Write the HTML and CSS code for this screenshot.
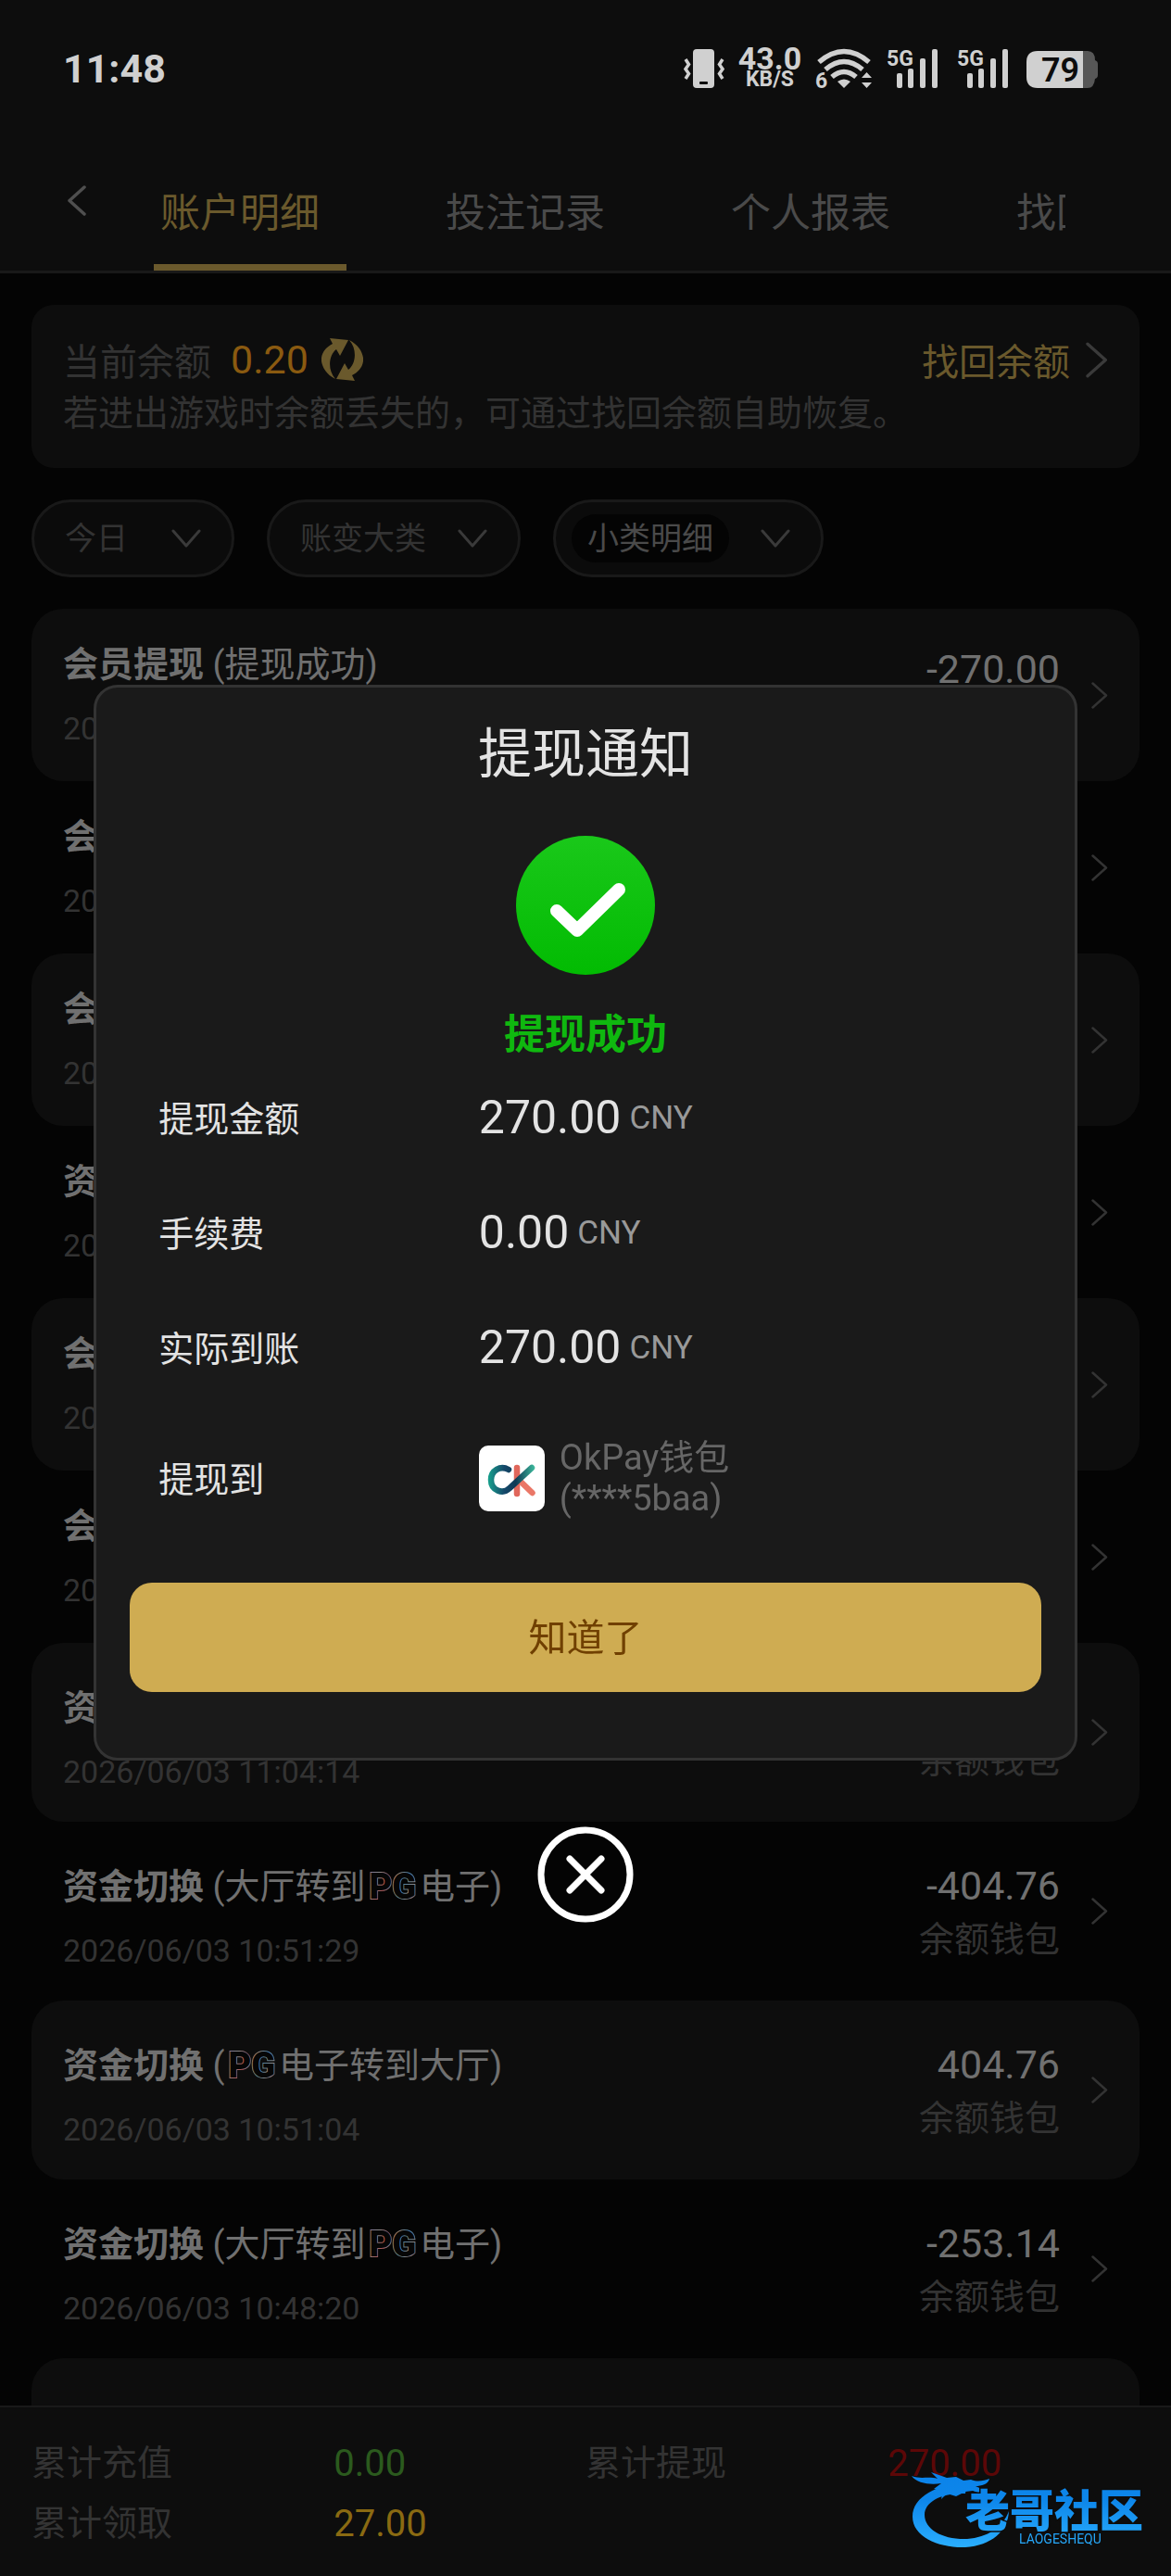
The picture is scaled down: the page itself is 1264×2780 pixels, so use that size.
FILE: index.html
```html
<!DOCTYPE html>
<html lang="zh-CN">
<head>
<meta charset="utf-8">
<meta name="viewport" content="width=device-width, initial-scale=1">
<title>账户明细</title>
<link rel="stylesheet" href="styles.css">
</head>
<body>
<svg class="sprite" aria-hidden="true">
  <symbol id="chevron-right" viewBox="0 0 18 29"><path d="M1.500 1.500 16 14.500 1.500 27.500" fill="none" stroke="currentColor" stroke-width="2.500" stroke-linecap="round" stroke-linejoin="round"/></symbol>
  <symbol id="chevron-down" viewBox="0 0 32 20"><path d="M2 2 16 18 30 2" fill="none" stroke="currentColor" stroke-width="3" stroke-linecap="round" stroke-linejoin="round"/></symbol>
  <symbol id="bars" viewBox="0 0 62 44">
    <g fill="currentColor"><rect x="12" y="27" width="6" height="16" rx="2"/><rect x="24" y="22" width="6" height="21" rx="2"/><rect x="37" y="11" width="6" height="32" rx="2"/><rect x="50" y="1" width="6" height="42" rx="2"/></g>
  </symbol>
</svg>

<div class="app">
  <header class="header">
    <div class="status">
      <time class="clock">11:48</time>
      <div class="status-icons">
        <svg width="44" height="44" viewBox="0 0 44 44" fill="currentColor"><rect x="10" y="1" width="23" height="42" rx="4"/><rect x="17" y="36" width="9" height="3" rx="1" fill="#0d0d0d"/><path d="M2 12 5.500 17.500 2 22.500 5.500 27.500 2 33M42 12 38.500 17.500 42 22.500 38.500 27.500 42 33" fill="none" stroke="currentColor" stroke-width="3.500"/></svg>
        <div class="speed"><b class="speed-value">43.0</b><b class="speed-unit">KB/S</b></div>
        <svg width="62" height="44" viewBox="0 0 62 44" overflow="visible"><g fill="none" stroke="currentColor" stroke-width="5.500"><path d="M4 15Q31-8 58 15"/><path d="M11 23Q31 6 51 23"/><path d="M18 31Q31 20 44 31"/></g><path d="M24 36Q31 31 38 36L31 43Z" fill="currentColor"/><path d="M50 32 55.500 26 61 32ZM50 37H61L55.500 43Z" fill="currentColor"/><text x="0" y="43" font-size="23" font-weight="700" fill="currentColor" class="glyph">6</text></svg>
        <svg width="62" height="44" viewBox="0 0 62 44" overflow="visible"><use href="#bars"/><text x="1" y="19" font-size="23" font-weight="700" fill="currentColor" class="glyph">5G</text></svg>
        <svg width="62" height="44" viewBox="0 0 62 44" overflow="visible"><use href="#bars"/><text x="1" y="19" font-size="23" font-weight="700" fill="currentColor" class="glyph">5G</text></svg>
        <svg width="77" height="44" viewBox="0 0 77 44"><path d="M61 3H66Q74 3 74 13 77 14 77 17V29Q77 32 74 33 73 43 66 43H61Z" fill="#575757"/><path d="M61 3H12Q0 3 0 15V31Q0 43 12 43H61Z" fill="currentColor"/><text x="16" y="36" font-size="36" font-weight="600" fill="#0d0d0d" class="glyph">79</text></svg>
      </div>
    </div>
    <nav class="nav">
      <button class="back" type="button" aria-label="返回"><svg width="22" height="33" viewBox="0 0 22 33"><path d="M19 2 3 16.500 19 31" fill="none" stroke="currentColor" stroke-width="3.500" stroke-linecap="round" stroke-linejoin="round"/></svg></button>
      <div class="tabs">
        <a class="tab tab--active" href="#detail">账户明细</a>
        <a class="tab" href="#bets">投注记录</a>
        <a class="tab" href="#report">个人报表</a>
        <a class="tab" href="#recover">找回余额</a>
      </div>
    </nav>
  </header>

  <main class="main">
    <section class="balance">
      <div class="balance-row">
        <span>当前余额</span>
        <span class="balance-value">0.20</span>
        <button class="refresh" type="button" aria-label="刷新"><svg width="45" height="46" viewBox="0 0 45 46" fill="currentColor"><path id="arc" d="M9 0 29 2 20 19 16 12C8 18 6 34 15 44 3 38-1 27 0 21 1 14 6 9 12 6Z"/><use href="#arc" transform="rotate(180 22.500 23)"/></svg></button>
        <a class="recover" href="#recover">找回余额<svg class="arrow-lg" width="24" height="39"><use href="#chevron-right"/></svg></a>
      </div>
      <p class="balance-note">若进出游戏时余额丢失的，可通过找回余额自助恢复。</p>
    </section>

    <form class="filters">
      <div class="filter filter--date"><select aria-label="日期"><option>今日</option></select><svg width="32" height="20"><use href="#chevron-down"/></svg></div>
      <div class="filter"><select aria-label="账变大类"><option>账变大类</option></select><svg width="32" height="20"><use href="#chevron-down"/></svg></div>
      <div class="filter filter--sub"><select aria-label="小类明细"><option>小类明细</option></select><svg width="32" height="20"><use href="#chevron-down"/></svg></div>
    </form>

    <ul class="records">
      <li class="record"><div class="record-main"><p class="record-title"><b>会员提现</b> (提现成功)</p><p class="record-date">2026/06/03 11:46:20</p></div><div class="record-side"><p class="amount">-270.00</p><p class="wallet">余额钱包</p></div><svg width="18" height="29"><use href="#chevron-right"/></svg></li>
      <li class="record"><div class="record-main"><p class="record-title"><b>会员</b></p><p class="record-date">2026</p></div><svg width="18" height="29"><use href="#chevron-right"/></svg></li>
      <li class="record"><div class="record-main"><p class="record-title"><b>会员</b></p><p class="record-date">2026</p></div><svg width="18" height="29"><use href="#chevron-right"/></svg></li>
      <li class="record"><div class="record-main"><p class="record-title"><b>资金</b></p><p class="record-date">2026</p></div><svg width="18" height="29"><use href="#chevron-right"/></svg></li>
      <li class="record"><div class="record-main"><p class="record-title"><b>会员</b></p><p class="record-date">2026</p></div><svg width="18" height="29"><use href="#chevron-right"/></svg></li>
      <li class="record"><div class="record-main"><p class="record-title"><b>会员</b></p><p class="record-date">2026</p></div><svg width="18" height="29"><use href="#chevron-right"/></svg></li>
      <li class="record record--game"><div class="record-main"><p class="record-title"><b>资金切换</b></p><p class="record-date">2026/06/03 11:04:14</p></div><div class="record-side"><p class="amount">404.76</p><p class="wallet">余额钱包</p></div><svg width="18" height="29"><use href="#chevron-right"/></svg></li>
      <li class="record record--game"><div class="record-main"><p class="record-title"><b>资金切换</b> (大厅转到<span class="pg">PG</span>电子)</p><p class="record-date">2026/06/03 10:51:29</p></div><div class="record-side"><p class="amount">-404.76</p><p class="wallet">余额钱包</p></div><svg width="18" height="29"><use href="#chevron-right"/></svg></li>
      <li class="record record--game"><div class="record-main"><p class="record-title"><b>资金切换</b> (<span class="pg">PG</span>电子转到大厅)</p><p class="record-date">2026/06/03 10:51:04</p></div><div class="record-side"><p class="amount">404.76</p><p class="wallet">余额钱包</p></div><svg width="18" height="29"><use href="#chevron-right"/></svg></li>
      <li class="record record--game"><div class="record-main"><p class="record-title"><b>资金切换</b> (大厅转到<span class="pg">PG</span>电子)</p><p class="record-date">2026/06/03 10:48:20</p></div><div class="record-side"><p class="amount">-253.14</p><p class="wallet">余额钱包</p></div><svg width="18" height="29"><use href="#chevron-right"/></svg></li>
      <li class="record record--game"></li>
    </ul>
  </main>

  <footer class="footer">
    <dl class="totals">
      <dt>累计充值</dt><dd class="total-in">0.00</dd>
      <dt>累计提现</dt><dd class="total-out">270.00</dd>
      <dt>累计领取</dt><dd class="total-bonus">27.00</dd>
    </dl>
  </footer>
</div>

<div class="overlay">
  <section class="modal" role="dialog" aria-modal="true" aria-labelledby="modal-title">
    <h1 class="modal-title" id="modal-title">提现通知</h1>
    <svg class="modal-check" width="150" height="150" viewBox="0 0 150 150">
      <defs><linearGradient id="green" x1="0" y1="0" x2="0" y2="1"><stop offset="0" stop-color="#1ac81a"/><stop offset="1" stop-color="#02bb02"/></linearGradient></defs>
      <circle cx="75" cy="75" r="75" fill="url(#green)"/>
      <path d="M44 81 66 102 111 58" fill="none" stroke="#fff" stroke-width="14" stroke-linecap="round" stroke-linejoin="round"/>
    </svg>
    <p class="modal-status">提现成功</p>
    <dl class="details">
      <div class="detail"><dt>提现金额</dt><dd><span class="money">270.00</span><span class="unit">CNY</span></dd></div>
      <div class="detail"><dt>手续费</dt><dd><span class="money">0.00</span><span class="unit">CNY</span></dd></div>
      <div class="detail"><dt>实际到账</dt><dd><span class="money">270.00</span><span class="unit">CNY</span></dd></div>
      <div class="detail detail--target"><dt>提现到</dt><dd>
        <svg class="okpay" width="71" height="71" viewBox="0 0 71 71">
          <defs>
            <linearGradient id="teal" gradientUnits="userSpaceOnUse" x1="10" y1="30" x2="60" y2="30"><stop offset="0" stop-color="#17a08c"/><stop offset=".35" stop-color="#15486a"/><stop offset=".6" stop-color="#0f3a55"/><stop offset="1" stop-color="#3cb99c"/></linearGradient>
          </defs>
          <rect width="71" height="71" rx="10" fill="#fff"/>
          <g fill="none" stroke-width="6.500" stroke-linecap="round"><path d="M41 24V52" stroke="#e0675b"/><path d="M44 38 57.500 51" stroke="#ea7767"/><path d="M32 26C23 21 13 27 13 37 13 49 26 53 33 46L57 24" stroke="url(#teal)"/></g>
        </svg>
        <span class="target">OkPay钱包<br>(****5baa)</span></dd></div>
    </dl>
    <button class="confirm" type="button">知道了</button>
  </section>
  <button class="close" type="button" aria-label="关闭"><svg width="104" height="104" viewBox="0 0 104 104" fill="none" stroke="#fff" stroke-linecap="round"><circle cx="52" cy="52" r="48" stroke-width="7"/><path d="M35 35 69 69M69 35 35 69" stroke-width="7"/></svg></button>
</div>

<svg class="watermark" width="264" height="84" viewBox="0 0 264 84" role="img" aria-label="老哥社区">
  <defs><linearGradient id="blue" gradientUnits="userSpaceOnUse" x1="0" y1="0" x2="0" y2="84"><stop offset="0" stop-color="#0b83ea"/><stop offset=".35" stop-color="#0d86ea"/><stop offset="1" stop-color="#2cb0ff"/></linearGradient></defs>
  <g fill="url(#blue)">
    <path d="M62 11C30 13 3 26 3 48 3 70 32 82 60 81 88 79 106 64 107 42 100 60 84 70 62 72 36 73 16 62 16 46 16 32 34 22 60 23Z"/>
    <path d="M2 4C12 8 20 4 30 7L23 0 40 6 50 5 58 9 66 8C74 11 80 9 86 7 85 13 77 15 71 15L82 20 79 24 68 20 60 21 50 26 40 23 34 29 36 20 26 18 34 12C22 14 8 12 2 4Z"/>
    <text x="60" y="59" font-size="48" font-weight="900" stroke="#0d0d0d" stroke-width="3" paint-order="stroke" class="glyph">老哥社区</text>
    <text x="118" y="77" font-size="14" class="glyph">LAOGESHEQU</text>
  </g>
</svg>
</body>
</html>
```
FILE: styles.css
```css
:root {
  --page: #040404;
  --panel: #0d0d0d;
  --line: #191919;
  --faint: #333;
  --muted: #4a4a4a;
  --text: #707070;
  --gold: #6a592c;
}

* {
  box-sizing: border-box;
}

body {
  margin: 0;
  background: var(--page);
  color: var(--faint);
  font-family: Roboto, "Noto Sans CJK SC", sans-serif;
  font-size: 38px;
}

p, dl, dd, ul, h1 {
  margin: 0;
  padding: 0;
}

svg {
  display: block;
  flex: none;
}

a {
  color: inherit;
  text-decoration: none;
}

button,
select {
  padding: 0;
  border: 0;
  background: none;
  color: inherit;
  font: inherit;
}

.sprite {
  position: absolute;
  width: 0;
  height: 0;
}

.glyph {
  font-family: Roboto, "Noto Sans CJK SC", sans-serif;
}

.app {
  display: flex;
  flex-direction: column;
  height: 100vh;
}

/* Header */
.header {
  flex: none;
  background: var(--panel);
  border-bottom: 3px solid var(--line);
}

.status {
  display: flex;
  align-items: center;
  justify-content: space-between;
  height: 148px;
  padding: 0 79px 0 68px;
  color: #d0d0d0;
}

.clock {
  font-size: 43px;
  font-weight: 700;
}

.status-icons {
  display: flex;
  align-items: center;
  gap: 14px;
}

.speed {
  display: flex;
  flex-direction: column;
  align-items: center;
  width: 70px;
}

.speed-value {
  font-size: 34px;
  line-height: 24px;
}

.speed-unit {
  font-size: 23px;
  line-height: 22px;
}

.nav {
  display: flex;
  height: 144px;
  padding-right: 114px;
}

.back {
  flex: none;
  width: 166px;
  height: 136px;
  padding-left: 72px;
  color: #4f4f4f;
}

.tabs {
  display: flex;
  flex: 1;
  gap: 100px;
  min-width: 0;
  overflow: hidden;
}

.tab {
  display: flex;
  flex: none;
  align-items: center;
  width: 208px;
  padding: 18px 0 0 7px;
  border-bottom: 7px solid transparent;
  color: var(--muted);
  font-size: 43px;
  white-space: nowrap;
}

.tab--active {
  border-color: var(--gold);
  color: var(--gold);
}

/* Content */
.main {
  flex: 1;
  min-height: 0;
  padding: 34px 34px 0;
  overflow: hidden;
}

.balance {
  padding: 29px 34px 31px;
  border-radius: 24px;
  background: var(--panel);
}

.balance-row {
  display: flex;
  align-items: center;
  height: 60px;
  font-size: 40px;
}

.balance-value {
  margin: 0 14px 0 21px;
  color: #8a5a10;
  font-size: 43px;
}

.refresh {
  color: var(--gold);
}

.recover {
  display: flex;
  align-items: center;
  gap: 17px;
  margin-left: auto;
  color: var(--gold);
}

.arrow-lg {
  color: #3a3a3a;
}

.balance-note {
  line-height: 56px;
}

.filters {
  display: flex;
  gap: 35px;
  margin: 34px 0;
}

.filter {
  display: flex;
  align-items: center;
  justify-content: space-between;
  gap: 34px;
  height: 84px;
  padding: 0 33px;
  border: 3px solid var(--line);
  border-radius: 42px;
  background: #0b0b0b;
  font-size: 34px;
}

.filter--date {
  gap: 47px;
}

.filter--sub {
  padding-left: 17px;
}

.filter select {
  appearance: none;
  height: 52px;
  line-height: 52px;
}

.filter--sub select {
  padding: 0 17px;
  border-radius: 26px;
  background: var(--page);
  color: var(--muted);
}

.filter svg {
  color: #3a3a3a;
}

.records {
  list-style: none;
}

.record {
  display: flex;
  align-items: center;
  gap: 34px;
  height: 186px;
  padding: 0 34px;
  border-radius: 34px;
}

.record:nth-child(odd) {
  background: var(--panel);
}

.record-main {
  flex: 1;
}

.record--game {
  height: 193px;
}

.record--game .record-main {
  padding-top: 12px;
}

.record-title {
  margin-bottom: 20px;
  color: var(--text);
  line-height: 52px;
  white-space: nowrap;
}

.record-date {
  font-size: 34px;
  line-height: 46px;
}

.pg {
  margin: 0 4px;
  background: linear-gradient(115deg, #7a6a9a, #888 20%, #a55 38%, #888 50%, #4f7f9f 66%, #888 80%, #a5604f);
  background-clip: text;
  -webkit-background-clip: text;
  -webkit-text-fill-color: #060606;
  -webkit-text-stroke: 2px transparent;
  font-weight: 900;
}

.record-side {
  text-align: right;
}

.amount {
  color: var(--text);
  font-size: 43px;
  line-height: 60px;
}

.wallet {
  line-height: 56px;
}

/* Totals */
.footer {
  flex: none;
  padding: 28px 34px 24px;
  border-top: 2px solid var(--line);
  background: var(--panel);
}

.totals {
  display: grid;
  grid-template-columns: 6fr 5fr 6fr 5fr;
  line-height: 65px;
}

.totals dd {
  font-size: 40px;
}

.total-in {
  color: #2b5a1e;
}

.total-out {
  color: #5c0707;
}

.total-bonus {
  color: #8a6a12;
}

/* Withdrawal notice */
.overlay {
  position: fixed;
  inset: 0;
  display: flex;
  flex-direction: column;
  align-items: center;
  justify-content: center;
  gap: 71px;
  padding-top: 34px;
}

.modal {
  display: flex;
  flex-direction: column;
  align-items: center;
  width: 84%;
  padding: 30px 36px 71px;
  border: 3px solid #333;
  border-radius: 26px;
  background: #1a1a1a;
  color: #e3e3e3;
}

.modal-title {
  font-size: 58px;
  font-weight: 400;
  line-height: 84px;
}

.modal-check {
  margin: 46px 0 38px;
}

.modal-status {
  color: #0fb80f;
  font-size: 44px;
  font-weight: 700;
  line-height: 54px;
}

.details {
  width: 100%;
  padding: 0 31px;
}

.detail {
  display: grid;
  grid-template-columns: 3fr 5fr;
  align-items: center;
  height: 124px;
}

.detail--target {
  height: 158px;
}

.detail dt {
  padding-bottom: 4px;
}

.detail dd {
  display: flex;
  align-items: center;
}

.money {
  font-size: 50px;
}

.unit {
  margin-left: 9px;
  color: #999;
  font-size: 35px;
}

.target {
  margin-left: 16px;
  color: #666;
  line-height: 44px;
}

.confirm {
  width: 100%;
  height: 118px;
  margin-top: 34px;
  padding-bottom: 6px;
  border-radius: 24px;
  background: #cfac52;
  color: #704000;
  font-size: 41px;
}

.close {
  flex: none;
}

.watermark {
  position: fixed;
  right: 18px;
  bottom: 28px;
}
```
